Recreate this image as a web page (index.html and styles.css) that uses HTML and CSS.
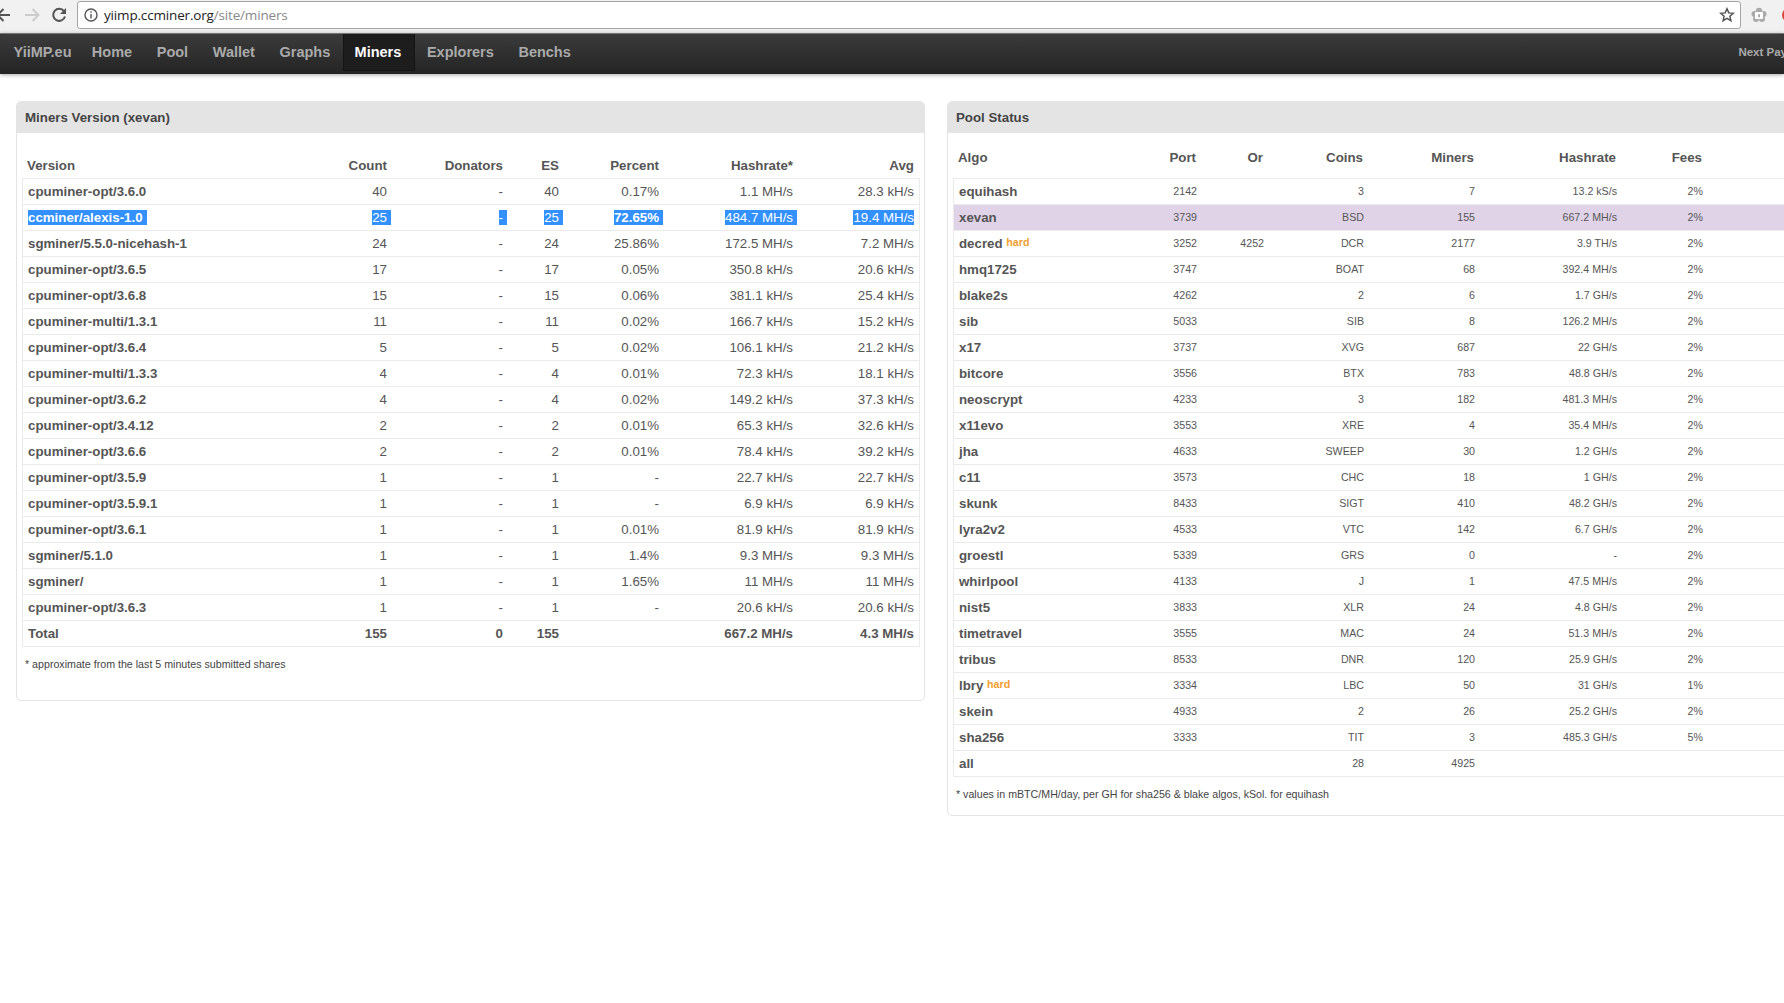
FILE: index.html
```
<!DOCTYPE html>
<html lang="en">

<head>
  <meta charset="utf-8">
  <title>Miners - yiimp.ccminer.org</title>
  <link rel="stylesheet" href="styles.css">
</head>

<body>
  <div class="browser">
    <svg class="back" width="20" height="20" viewBox="0 0 20 20"><path d="M20 10H8M13.5 4L7.5 10l6 6" /></svg>
    <svg class="forward" width="16" height="20" viewBox="0 0 16 20"><path d="M1 10h13M8.5 4l6 6-6 6" /></svg>
    <svg class="reload" width="18" height="20" viewBox="0 0 18 20"><path d="M14 6.2A6 6 0 1 0 15 11.5" /><path class="tip" d="M16 3v6h-6z" /></svg>
    <div class="address">
      <svg class="info" width="14" height="14" viewBox="0 0 14 14"><circle cx="7" cy="7" r="6" /><path d="M7 6v4.5M7 3.3v1.5" /></svg>
      <div class="url">yiimp.ccminer.org<span>/site/miners</span></div>
      <svg class="star" width="16" height="16" viewBox="0 0 16 16"><path d="M8 1.8l1.8 4.1 4.5.4-3.4 3 1 4.4L8 11.4l-3.9 2.3 1-4.4-3.4-3 4.5-.4z" /></svg>
    </div>
    <svg class="extension" width="16" height="16" viewBox="0 0 16 16"><circle cx="8" cy="4" r="3.2" /><circle cx="3.5" cy="7" r="3" /><circle cx="12.5" cy="7" r="3" /><circle cx="5" cy="12" r="3" /><circle cx="11" cy="12" r="3" /><rect class="hole" x="4" y="5" width="8" height="7" rx="1" /><path d="M7 7.2h2v3H7z" /></svg>
    <div class="red-dot"></div>
  </div>

  <div class="nav">
    <a class="brand">YiiMP.eu</a>
    <a>Home</a>
    <a>Pool</a>
    <a>Wallet</a>
    <a>Graphs</a>
    <a class="active">Miners</a>
    <a>Explorers</a>
    <a>Benchs</a>
    <span class="payout">Next Pay</span>
  </div>

  <div class="content">
    <div class="panel miners">
      <div class="panel-title">Miners Version (xevan)</div>
      <table>
        <colgroup>
          <col class="version"><col class="count"><col class="donators"><col class="es"><col class="percent"><col class="hashrate"><col class="avg">
        </colgroup>
        <thead>
          <tr><th>Version</th><th>Count</th><th>Donators</th><th>ES</th><th>Percent</th><th>Hashrate*</th><th>Avg</th></tr>
        </thead>
        <tbody>
          <tr><td>cpuminer-opt/3.6.0</td><td>40</td><td>-</td><td>40</td><td>0.17%</td><td>1.1 MH/s</td><td>28.3 kH/s</td></tr>
          <tr class="selected"><td><span>ccminer/alexis-1.0</span></td><td><span>25</span></td><td><span>-</span></td><td><span>25</span></td><td><span><b>72.65%</b></span></td><td><span>484.7 MH/s</span></td><td><span>19.4 MH/s</span></td></tr>
          <tr><td>sgminer/5.5.0-nicehash-1</td><td>24</td><td>-</td><td>24</td><td>25.86%</td><td>172.5 MH/s</td><td>7.2 MH/s</td></tr>
          <tr><td>cpuminer-opt/3.6.5</td><td>17</td><td>-</td><td>17</td><td>0.05%</td><td>350.8 kH/s</td><td>20.6 kH/s</td></tr>
          <tr><td>cpuminer-opt/3.6.8</td><td>15</td><td>-</td><td>15</td><td>0.06%</td><td>381.1 kH/s</td><td>25.4 kH/s</td></tr>
          <tr><td>cpuminer-multi/1.3.1</td><td>11</td><td>-</td><td>11</td><td>0.02%</td><td>166.7 kH/s</td><td>15.2 kH/s</td></tr>
          <tr><td>cpuminer-opt/3.6.4</td><td>5</td><td>-</td><td>5</td><td>0.02%</td><td>106.1 kH/s</td><td>21.2 kH/s</td></tr>
          <tr><td>cpuminer-multi/1.3.3</td><td>4</td><td>-</td><td>4</td><td>0.01%</td><td>72.3 kH/s</td><td>18.1 kH/s</td></tr>
          <tr><td>cpuminer-opt/3.6.2</td><td>4</td><td>-</td><td>4</td><td>0.02%</td><td>149.2 kH/s</td><td>37.3 kH/s</td></tr>
          <tr><td>cpuminer-opt/3.4.12</td><td>2</td><td>-</td><td>2</td><td>0.01%</td><td>65.3 kH/s</td><td>32.6 kH/s</td></tr>
          <tr><td>cpuminer-opt/3.6.6</td><td>2</td><td>-</td><td>2</td><td>0.01%</td><td>78.4 kH/s</td><td>39.2 kH/s</td></tr>
          <tr><td>cpuminer-opt/3.5.9</td><td>1</td><td>-</td><td>1</td><td>-</td><td>22.7 kH/s</td><td>22.7 kH/s</td></tr>
          <tr><td>cpuminer-opt/3.5.9.1</td><td>1</td><td>-</td><td>1</td><td>-</td><td>6.9 kH/s</td><td>6.9 kH/s</td></tr>
          <tr><td>cpuminer-opt/3.6.1</td><td>1</td><td>-</td><td>1</td><td>0.01%</td><td>81.9 kH/s</td><td>81.9 kH/s</td></tr>
          <tr><td>sgminer/5.1.0</td><td>1</td><td>-</td><td>1</td><td>1.4%</td><td>9.3 MH/s</td><td>9.3 MH/s</td></tr>
          <tr><td>sgminer/</td><td>1</td><td>-</td><td>1</td><td>1.65%</td><td>11 MH/s</td><td>11 MH/s</td></tr>
          <tr><td>cpuminer-opt/3.6.3</td><td>1</td><td>-</td><td>1</td><td>-</td><td>20.6 kH/s</td><td>20.6 kH/s</td></tr>
          <tr class="total"><td>Total</td><td>155</td><td>0</td><td>155</td><td></td><td>667.2 MH/s</td><td>4.3 MH/s</td></tr>
        </tbody>
      </table>
      <p>* approximate from the last 5 minutes submitted shares</p>
    </div>

    <div class="panel pool">
      <div class="panel-title">Pool Status</div>
      <table>
        <colgroup>
          <col class="algo"><col class="port"><col class="or"><col class="coins"><col class="workers"><col class="rate"><col class="fees"><col>
        </colgroup>
        <thead>
          <tr><th>Algo</th><th>Port</th><th>Or</th><th>Coins</th><th>Miners</th><th>Hashrate</th><th>Fees</th><th></th></tr>
        </thead>
        <tbody>
          <tr><td>equihash</td><td>2142</td><td></td><td>3</td><td>7</td><td>13.2 kS/s</td><td>2%</td><td></td></tr>
          <tr class="current"><td>xevan</td><td>3739</td><td></td><td>BSD</td><td>155</td><td>667.2 MH/s</td><td>2%</td><td></td></tr>
          <tr><td>decred <span class="hard">hard</span></td><td>3252</td><td>4252</td><td>DCR</td><td>2177</td><td>3.9 TH/s</td><td>2%</td><td></td></tr>
          <tr><td>hmq1725</td><td>3747</td><td></td><td>BOAT</td><td>68</td><td>392.4 MH/s</td><td>2%</td><td></td></tr>
          <tr><td>blake2s</td><td>4262</td><td></td><td>2</td><td>6</td><td>1.7 GH/s</td><td>2%</td><td></td></tr>
          <tr><td>sib</td><td>5033</td><td></td><td>SIB</td><td>8</td><td>126.2 MH/s</td><td>2%</td><td></td></tr>
          <tr><td>x17</td><td>3737</td><td></td><td>XVG</td><td>687</td><td>22 GH/s</td><td>2%</td><td></td></tr>
          <tr><td>bitcore</td><td>3556</td><td></td><td>BTX</td><td>783</td><td>48.8 GH/s</td><td>2%</td><td></td></tr>
          <tr><td>neoscrypt</td><td>4233</td><td></td><td>3</td><td>182</td><td>481.3 MH/s</td><td>2%</td><td></td></tr>
          <tr><td>x11evo</td><td>3553</td><td></td><td>XRE</td><td>4</td><td>35.4 MH/s</td><td>2%</td><td></td></tr>
          <tr><td>jha</td><td>4633</td><td></td><td>SWEEP</td><td>30</td><td>1.2 GH/s</td><td>2%</td><td></td></tr>
          <tr><td>c11</td><td>3573</td><td></td><td>CHC</td><td>18</td><td>1 GH/s</td><td>2%</td><td></td></tr>
          <tr><td>skunk</td><td>8433</td><td></td><td>SIGT</td><td>410</td><td>48.2 GH/s</td><td>2%</td><td></td></tr>
          <tr><td>lyra2v2</td><td>4533</td><td></td><td>VTC</td><td>142</td><td>6.7 GH/s</td><td>2%</td><td></td></tr>
          <tr><td>groestl</td><td>5339</td><td></td><td>GRS</td><td>0</td><td>-</td><td>2%</td><td></td></tr>
          <tr><td>whirlpool</td><td>4133</td><td></td><td>J</td><td>1</td><td>47.5 MH/s</td><td>2%</td><td></td></tr>
          <tr><td>nist5</td><td>3833</td><td></td><td>XLR</td><td>24</td><td>4.8 GH/s</td><td>2%</td><td></td></tr>
          <tr><td>timetravel</td><td>3555</td><td></td><td>MAC</td><td>24</td><td>51.3 MH/s</td><td>2%</td><td></td></tr>
          <tr><td>tribus</td><td>8533</td><td></td><td>DNR</td><td>120</td><td>25.9 GH/s</td><td>2%</td><td></td></tr>
          <tr><td>lbry <span class="hard">hard</span></td><td>3334</td><td></td><td>LBC</td><td>50</td><td>31 GH/s</td><td>1%</td><td></td></tr>
          <tr><td>skein</td><td>4933</td><td></td><td>2</td><td>26</td><td>25.2 GH/s</td><td>2%</td><td></td></tr>
          <tr><td>sha256</td><td>3333</td><td></td><td>TIT</td><td>3</td><td>485.3 GH/s</td><td>5%</td><td></td></tr>
          <tr><td>all</td><td></td><td></td><td>28</td><td>4925</td><td></td><td></td><td></td></tr>
        </tbody>
      </table>
      <p>* values in mBTC/MH/day, per GH for sha256 &amp; blake algos, kSol. for equihash</p>
    </div>
  </div>
</body>

</html>
```
FILE: styles.css
```
* {
  box-sizing: border-box;
}

body {
  margin: 0;
  height: 1003px;
  overflow: hidden;
  background: #fff;
  color: #444;
  font-family: "Liberation Sans", Arial, sans-serif;
}

/* browser toolbar */
.browser {
  display: flex;
  align-items: center;
  height: 33px;
  padding-bottom: 3px;
  background: #f1f1f1;
  overflow: hidden;
}

.browser svg {
  flex: none;
  fill: none;
  stroke: #555;
  stroke-width: 2;
}

.browser .back {
  margin-left: -10px;
}

.browser .forward {
  margin-left: 14px;
  stroke: #ccc;
}

.browser .reload {
  margin-left: 10px;
}

.browser .reload .tip {
  fill: #555;
  stroke: none;
}

.address {
  display: flex;
  align-items: center;
  flex: none;
  width: 1664px;
  height: 28px;
  margin-left: 9px;
  padding: 0 5px 0 6px;
  border: 1px solid #a6a6a6;
  border-radius: 3px;
  background: #fff;
}

.address .info {
  stroke-width: 1.4;
}

.url {
  flex: 1;
  margin-left: 6px;
  font-family: "Open Sans", sans-serif;
  font-size: 13.5px;
  letter-spacing: -0.17px;
  color: #222;
}

.url span {
  color: #888;
}

.address .star {
  stroke-width: 1.5;
}

.browser .extension {
  margin-left: 10px;
  fill: #aaa;
  stroke: none;
}

.extension .hole {
  fill: #fff;
}

.red-dot {
  flex: none;
  width: 14px;
  height: 14px;
  margin-left: 15px;
  border-radius: 50%;
  background: #d9443a;
}

/* site menu */
.nav {
  display: flex;
  height: 41px;
  padding-left: 4px;
  border-top: 1px solid #777;
  background: linear-gradient(#3b3b3b, #242424);
  box-shadow: 0 1px 4px rgba(0, 0, 0, 0.35);
}

.nav a {
  height: 37px;
  padding: 0 12.3px;
  line-height: 36px;
  font-size: 14.5px;
  font-weight: bold;
  color: #aaa;
}

.nav .brand {
  padding: 0 8px 0 9.5px;
}

.nav .active {
  padding: 0 12.3px 0 11px;
  background: #1d1d1d;
  border: 1px solid #141414;
  border-top: none;
  color: #fff;
}

.nav .payout {
  flex: none;
  margin-left: auto;
  margin-right: -3px;
  line-height: 37px;
  font-size: 11.5px;
  font-weight: bold;
  color: #aaa;
}

/* panels */
.content {
  display: flex;
  align-items: flex-start;
  gap: 22px;
  padding: 27px 0 0 16px;
}

.panel {
  flex: none;
  border: 1px solid #e4e4e4;
  border-radius: 5px;
  overflow: hidden;
}

.miners {
  width: 909px;
  height: 600px;
}

.pool {
  width: 920px;
  height: 715px;
}

.panel-title {
  height: 31px;
  padding-left: 8px;
  line-height: 32px;
  background: #e4e4e4;
  font-size: 13.3px;
  font-weight: bold;
}

.panel p {
  margin: 0;
  padding: 10px 0 0 8px;
  line-height: 14px;
  font-size: 10.67px;
}

table {
  table-layout: fixed;
  border-collapse: separate;
  border-spacing: 0;
  font-size: 13.3px;
  color: #555;
}

.miners table {
  width: 898px;
  margin: 19px 0 0 5px;
}

.pool table {
  width: 906px;
  margin: 4px 0 0 5px;
}

th,
td {
  padding: 0 6px;
  border-bottom: 1px solid #ebebeb;
  text-align: right;
  line-height: 15px;
  white-space: nowrap;
}

th:first-child,
td:first-child {
  text-align: left;
  font-weight: bold;
}

td {
  height: 26px;
}

td:first-child {
  border-left: 1px solid #ebebeb;
  padding-left: 5px;
}

td:last-child {
  border-right: 1px solid #ebebeb;
  padding-right: 5px;
}

.miners th {
  height: 27px;
  padding-left: 5px;
}

.pool th {
  height: 42px;
  padding: 0 7px 0 5px;
}

.pool td {
  font-size: 10.67px;
}

.pool td:first-child {
  font-size: 13.3px;
}

.total td {
  font-weight: bold;
}

.selected span {
  margin-right: -4px;
  padding-right: 4px;
  background: #3390ff;
  color: #fff;
}

.selected td:last-child span {
  margin-right: 0;
  padding-right: 0;
}

.current td {
  background: #e0d3e8;
}

.pool .hard {
  vertical-align: 2px;
  line-height: 10px;
  font-size: 10.67px;
  color: #f0a030;
}

/* column widths */
.version { width: 258px; }
.count { width: 113px; }
.donators { width: 116px; }
.es { width: 56px; }
.percent { width: 100px; }
.hashrate { width: 134px; }
.avg { width: 121px; }

.algo { width: 150px; }
.port { width: 100px; }
.or { width: 67px; }
.coins { width: 100px; }
.workers { width: 111px; }
.rate { width: 142px; }
.fees { width: 86px; }
```
